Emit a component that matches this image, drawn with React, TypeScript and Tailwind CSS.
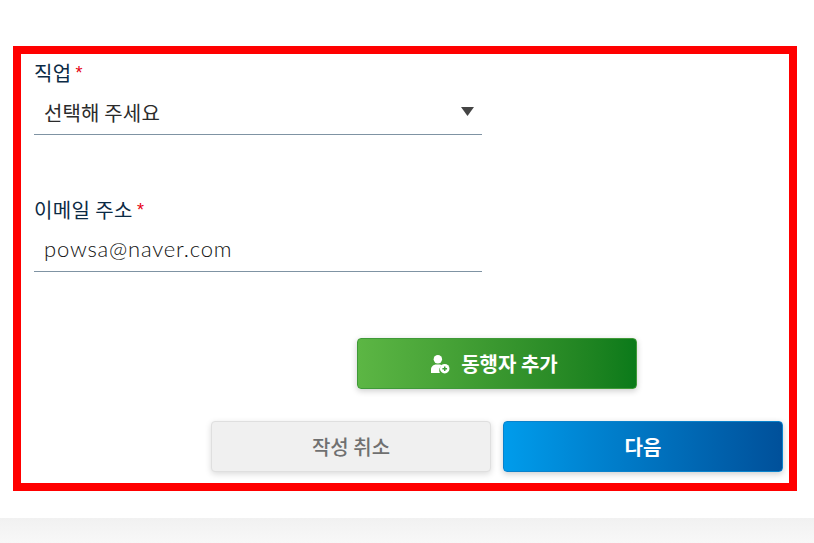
const labelFont = "font-['Noto_Sans_CJK_KR','Noto_Sans',sans-serif]";

function Field({ label, children, className }: { label: string; children: React.ReactNode; className?: string }) {
    return (
        <div className={`w-[448px] ${className ?? ''}`}>
            <div className="h-[36px] flex items-center text-[20px] leading-none text-[#0b2a45] tracking-[0.4px]">
                {label}
                <span className="ml-[4px] mb-[1px] text-[#e60012] text-[18px] font-['Liberation_Sans',sans-serif]">*</span>
            </div>
            <div className="h-[44px] border-b border-[#7f93a3] pl-[10px] flex items-center justify-between">{children}</div>
        </div>
    );
}

function UserPlusIcon() {
    return (
        <svg width="19" height="19" viewBox="1 1 18 18" fill="#fff" className="shrink-0">
            <circle cx="7.500" cy="5" r="4" />
            <path d="M1 18v-3.200C1 12 3.200 10 6 10h3c1 0 1.900.2 2.600.7A5.500 5.500 0 0 0 9.400 18Z" />
            <circle cx="14" cy="14" r="4.500" />
            <path d="M13.300 11.800h1.400v1.500h1.500v1.400h-1.500v1.500h-1.400v-1.500h-1.500v-1.400h1.500Z" fill="#3f9f38" />
        </svg>
    );
}

export default function App() {
    return (
        <div className={`h-[543px] w-[814px] overflow-hidden bg-white ${labelFont}`}>
            <div className="pl-[13px] pt-[46px] h-[518px]">
                <div className="w-[784px] h-[445px] border-8 border-[#ff0000] flex flex-col pl-[13px] pt-[1px]">
                    <Field label="직업">
                        <span className="text-[20px] text-[#2b2b2b] tracking-[0.15px]">선택해 주세요</span>
                        <svg width="13" height="9" viewBox="0 0 13 9" className="mr-[8px] mb-[3px]">
                            <path d="M0 0h13L6.500 9Z" fill="#444" />
                        </svg>
                    </Field>
                    <Field label="이메일 주소" className="mt-[57px]">
                        <span className="font-['Lato',sans-serif] font-light text-[22px] text-[#111111] tracking-[0.8px] mb-[2px]">powsa@naver.com</span>
                    </Field>
                    <div className="mt-[66px] flex justify-end pr-[152px]">
                        <button className="w-[280px] h-[51px] pr-[5px] pt-[1px] rounded-[4px] border border-[#3f9a38] bg-gradient-to-r from-[#5cb644] to-[#0a7a1a] shadow-[0_2px_6px_rgba(0,0,0,0.2)] flex items-center justify-center gap-[11px] text-white text-[20px] font-bold">
                            <UserPlusIcon />
                            동행자 추가
                        </button>
                    </div>
                    <div className="mt-[32px] flex justify-end gap-[12px] pr-[6px]">
                        <button className="w-[280px] h-[51px] rounded-[4px] border border-[#dfdfdf] bg-[#f0f0f0] shadow-[0_2px_6px_rgba(0,0,0,0.15)] text-[#707070] text-[20px] font-medium">
                            작성 취소
                        </button>
                        <button className="w-[280px] h-[51px] rounded-[4px] border border-[#0a82cc] bg-gradient-to-r from-[#009ceb] to-[#00509a] shadow-[0_2px_6px_rgba(0,0,0,0.2)] text-white text-[20px] font-bold">
                            다음
                        </button>
                    </div>
                </div>
            </div>
            <div className="h-[25px] bg-gradient-to-b from-[#f1f1f1] to-[#f8f8f8]" />
        </div>
    );
}
